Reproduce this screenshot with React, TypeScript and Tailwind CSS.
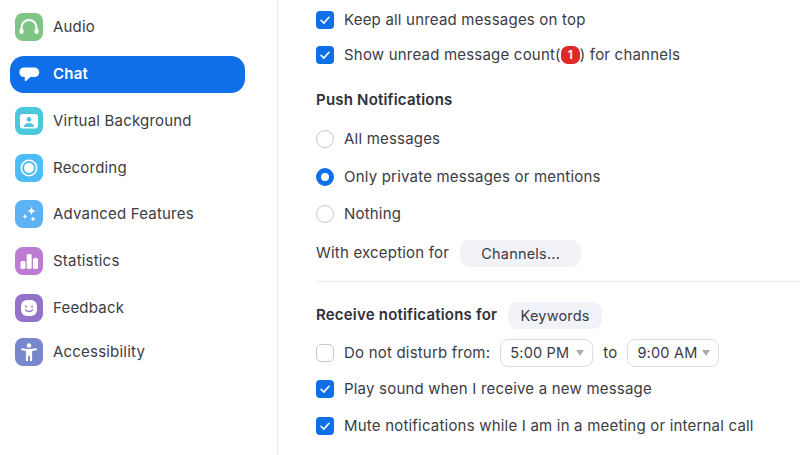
import type { ReactNode } from "react";

const FONT = "font-['Inter','Noto_Sans',sans-serif]";

// ── sidebar icons, white glyph on a 28px rounded tile ──────────────────────
function Headphones() {
  return (
    <svg viewBox="0 0 28 28" className="size-7" fill="none">
      <path d="M6.5 19v-4.5a7.5 7.5 0 0 1 15 0V19" stroke="#fff" strokeWidth="2" />
      <rect x="4.5" y="15.5" width="4" height="5.5" rx="2" fill="#fff" />
      <rect x="19.5" y="15.5" width="4" height="5.5" rx="2" fill="#fff" />
    </svg>
  );
}

function Bubble() {
  return (
    <svg viewBox="0 0 28 28" className="size-7" fill="#fff">
      <path d="M8.5 7.5h11a4.5 4.5 0 0 1 0 9.6h-4.2l-4.3 4c-.6.5-1.2.2-1.2-.5v-3.6h-1.3a4.8 4.8 0 0 1 0-9.5z" />
    </svg>
  );
}

function Person() {
  return (
    <svg viewBox="0 0 28 28" className="size-7">
      <rect x="5" y="7" width="18" height="14.5" rx="3" fill="#fff" />
      <circle cx="14" cy="12.4" r="2.4" fill="#4cc8dc" />
      <path d="M9 20c0-2.8 2-4 5-4s5 1.200 5 4z" fill="#4cc8dc" />
    </svg>
  );
}

function Rec() {
  return (
    <svg viewBox="0 0 28 28" className="size-7" fill="none">
      <circle cx="14" cy="14" r="7.700" stroke="#fff" strokeWidth="1.600" />
      <circle cx="14" cy="14" r="5" fill="#fff" />
    </svg>
  );
}

function Sparkles() {
  return (
    <svg viewBox="0 0 28 28" className="size-7" fill="#fff">
      <path d="M16.500 6.500c.5 3 1.500 4 4.500 4.500-3 .5-4 1.500-4.500 4.500-.5-3-1.500-4-4.500-4.500 3-.5 4-1.500 4.500-4.500z" />
      <path d="M10 13.500c.3 2 1 2.700 3 3-2 .3-2.700 1-3 3-.3-2-1-2.700-3-3 2-.3 2.700-1 3-3z" />
      <circle cx="18" cy="19" r="1.700" />
    </svg>
  );
}

function Bars() {
  return (
    <svg viewBox="0 0 28 28" className="size-7" fill="#fff">
      <rect x="5.500" y="14" width="5" height="8" rx="1.500" />
      <rect x="11.700" y="7" width="5" height="15" rx="1.500" />
      <rect x="18" y="11" width="5" height="11" rx="1.500" />
    </svg>
  );
}

function Smile() {
  return (
    <svg viewBox="0 0 28 28" className="size-7">
      <rect x="6" y="6" width="16" height="16" rx="6" fill="#fff" />
      <circle cx="11" cy="12.500" r="1" fill="#9273c9" />
      <circle cx="17" cy="12.500" r="1" fill="#9273c9" />
      <path d="M10.500 16c1.800 2 5.200 2 7 0" stroke="#9273c9" strokeWidth="1.300" fill="none" strokeLinecap="round" />
    </svg>
  );
}

function Figure() {
  return (
    <svg viewBox="0 0 28 28" className="size-7" fill="#fff">
      <circle cx="14" cy="7.500" r="2.300" />
      <path d="M6 11.200c0-.6.5-1 1.100-.9 4.500.8 9.300.8 13.800 0 .6-.1 1.100.3 1.100.9s-.4 1-1 1.100l-3.900.6v9.300a1.100 1.100 0 0 1-2.200 0v-4.400h-1.800v4.400a1.100 1.100 0 0 1-2.200 0v-9.300l-3.900-.6c-.6-.1-1-.5-1-1.100z" />
    </svg>
  );
}

function NavItem({ tile, icon, label, className = "" }: { tile: string; icon: ReactNode; label: string; className?: string }) {
  return (
    <div className={`flex h-[47px] items-center gap-[10px] pl-[15px] ${className}`}>
      <span className={`flex size-7 shrink-0 items-center justify-center rounded-[8px] ${tile}`}>{icon}</span>
      <span className="text-[15px] tracking-[0.2px] text-[#3b3b44]">{label}</span>
    </div>
  );
}

function Check({ on = true }: { on?: boolean }) {
  if (!on) {
    return <span className="size-[18px] shrink-0 rounded-[5px] border border-[#c6c6ce] bg-white" />;
  }
  return (
    <span className="flex size-[18px] shrink-0 items-center justify-center rounded-[4px] bg-[#0e6fe8]">
      <svg viewBox="0 0 18 18" className="size-[18px]" fill="none" stroke="#fff" strokeWidth="1.600" strokeLinecap="round" strokeLinejoin="round">
        <path d="M5 9.300l2.800 2.800L13 6.300" />
      </svg>
    </span>
  );
}

function Radio({ on = false }: { on?: boolean }) {
  return on ? (
    <span className="size-[18px] shrink-0 rounded-full border-[5px] border-[#0e6fe8] bg-white" />
  ) : (
    <span className="size-[18px] shrink-0 rounded-full border border-[#c6c6ce] bg-white" />
  );
}

function Row({ control, children, className = "" }: { control: ReactNode; children: ReactNode; className?: string }) {
  return (
    <div className={`flex h-6 items-center gap-[10px] text-[15px] tracking-[0.2px] text-[#3b3b44] ${className}`}>
      {control}
      <span>{children}</span>
    </div>
  );
}

function TimeSelect({ value, width }: { value: string; width: string }) {
  return (
    <span className={`flex h-7 items-center justify-between rounded-[8px] border border-[#dcdde2] pl-[9px] pr-[8px] text-[14.500px] tracking-[0.2px] text-[#3b3b44] ${width}`}>
      {value}
      <svg viewBox="0 0 8 6" className="h-[6px] w-2" fill="#a9acb4">
        <path d="M0 0h8L4 6z" />
      </svg>
    </span>
  );
}

export default function App() {
  return (
    <div className={`flex h-[455px] w-[800px] overflow-hidden bg-white ${FONT}`}>
      {/* sidebar */}
      <aside className="h-full w-[278px] shrink-0 border-r border-[#ebecef] pt-[3.500px]">
        <NavItem tile="bg-[#7fc686]" icon={<Headphones />} label="Audio" />
        <div className="ml-[10px] flex h-[37px] w-[235px] items-center gap-[10px] rounded-[14px] bg-[#0e6fe8] pl-[5px] my-[5px]">
          <span className="flex size-7 shrink-0 items-center justify-center"><Bubble /></span>
          <span className="text-[15px] font-semibold tracking-[0.2px] text-white">Chat</span>
        </div>
        <NavItem tile="bg-[#4cc8dc]" icon={<Person />} label="Virtual Background" />
        <NavItem tile="bg-[#4fbdf5]" icon={<Rec />} label="Recording" />
        <NavItem tile="bg-[#5cb2f5]" icon={<Sparkles />} label="Advanced Features" className="-mt-px" />
        <NavItem tile="bg-[#bd7bd3]" icon={<Bars />} label="Statistics" />
        <NavItem tile="bg-[#9273c9]" icon={<Smile />} label="Feedback" />
        <NavItem tile="bg-[#7887cb]" icon={<Figure />} label="Accessibility" className="-mt-[3px]" />
      </aside>

      {/* settings pane */}
      <main className="min-w-0 flex-1 pl-[38px] pt-2">
        <Row control={<Check />}>Keep all unread messages on top</Row>
        <Row control={<Check />} className="mt-[11px]">
          <span className="inline-flex items-center">
            Show unread message count(
            <span className="flex h-[18px] w-[19px] items-center justify-center rounded-[7px] bg-[#e02828] text-[12px] font-semibold tracking-normal text-white">1</span>
            ) for channels
          </span>
        </Row>

        <div className="mt-[21px] flex h-6 items-center text-[15px] font-semibold tracking-[0.2px] text-[#2f2f38]">Push Notifications</div>

        <Row control={<Radio />} className="mt-[15px]">All messages</Row>
        <Row control={<Radio on />} className="mt-[14px]">Only private messages or mentions</Row>
        <Row control={<Radio />} className="mt-[13px]">Nothing</Row>

        <div className="mt-[14px] flex items-center gap-[11px] text-[15px] tracking-[0.2px] text-[#3b3b44]">
          <span>With exception for</span>
          <span className="flex h-[27px] w-[121px] items-center justify-center rounded-[9px] bg-[#f1f3f9] text-[14.500px]">Channels...</span>
        </div>

        <div className="mt-[14px] h-px bg-[#ebecef]" />

        <div className="mt-5 flex items-center gap-[11px]">
          <span className="text-[15px] font-semibold tracking-[0.2px] text-[#2f2f38]">Receive notifications for</span>
          <span className="flex h-[27px] w-[94px] items-center justify-center rounded-[9px] bg-[#f1f3f9] text-[14.500px] tracking-[0.2px] text-[#3b3b44]">Keywords</span>
        </div>

        <div className="mt-[10px] flex items-center text-[15px] tracking-[0.2px] text-[#3b3b44]">
          <Check on={false} />
          <span className="ml-[10px]">Do not disturb from:</span>
          <span className="ml-[10px]"><TimeSelect value="5:00 PM" width="w-[93px]" /></span>
          <span className="mx-[10px]">to</span>
          <TimeSelect value="9:00 AM" width="w-[92px]" />
        </div>

        <Row control={<Check />} className="mt-[10px]">Play sound when I receive a new message</Row>
        <Row control={<Check />} className="mt-[13px]">Mute notifications while I am in a meeting or internal call</Row>
      </main>
    </div>
  );
}
